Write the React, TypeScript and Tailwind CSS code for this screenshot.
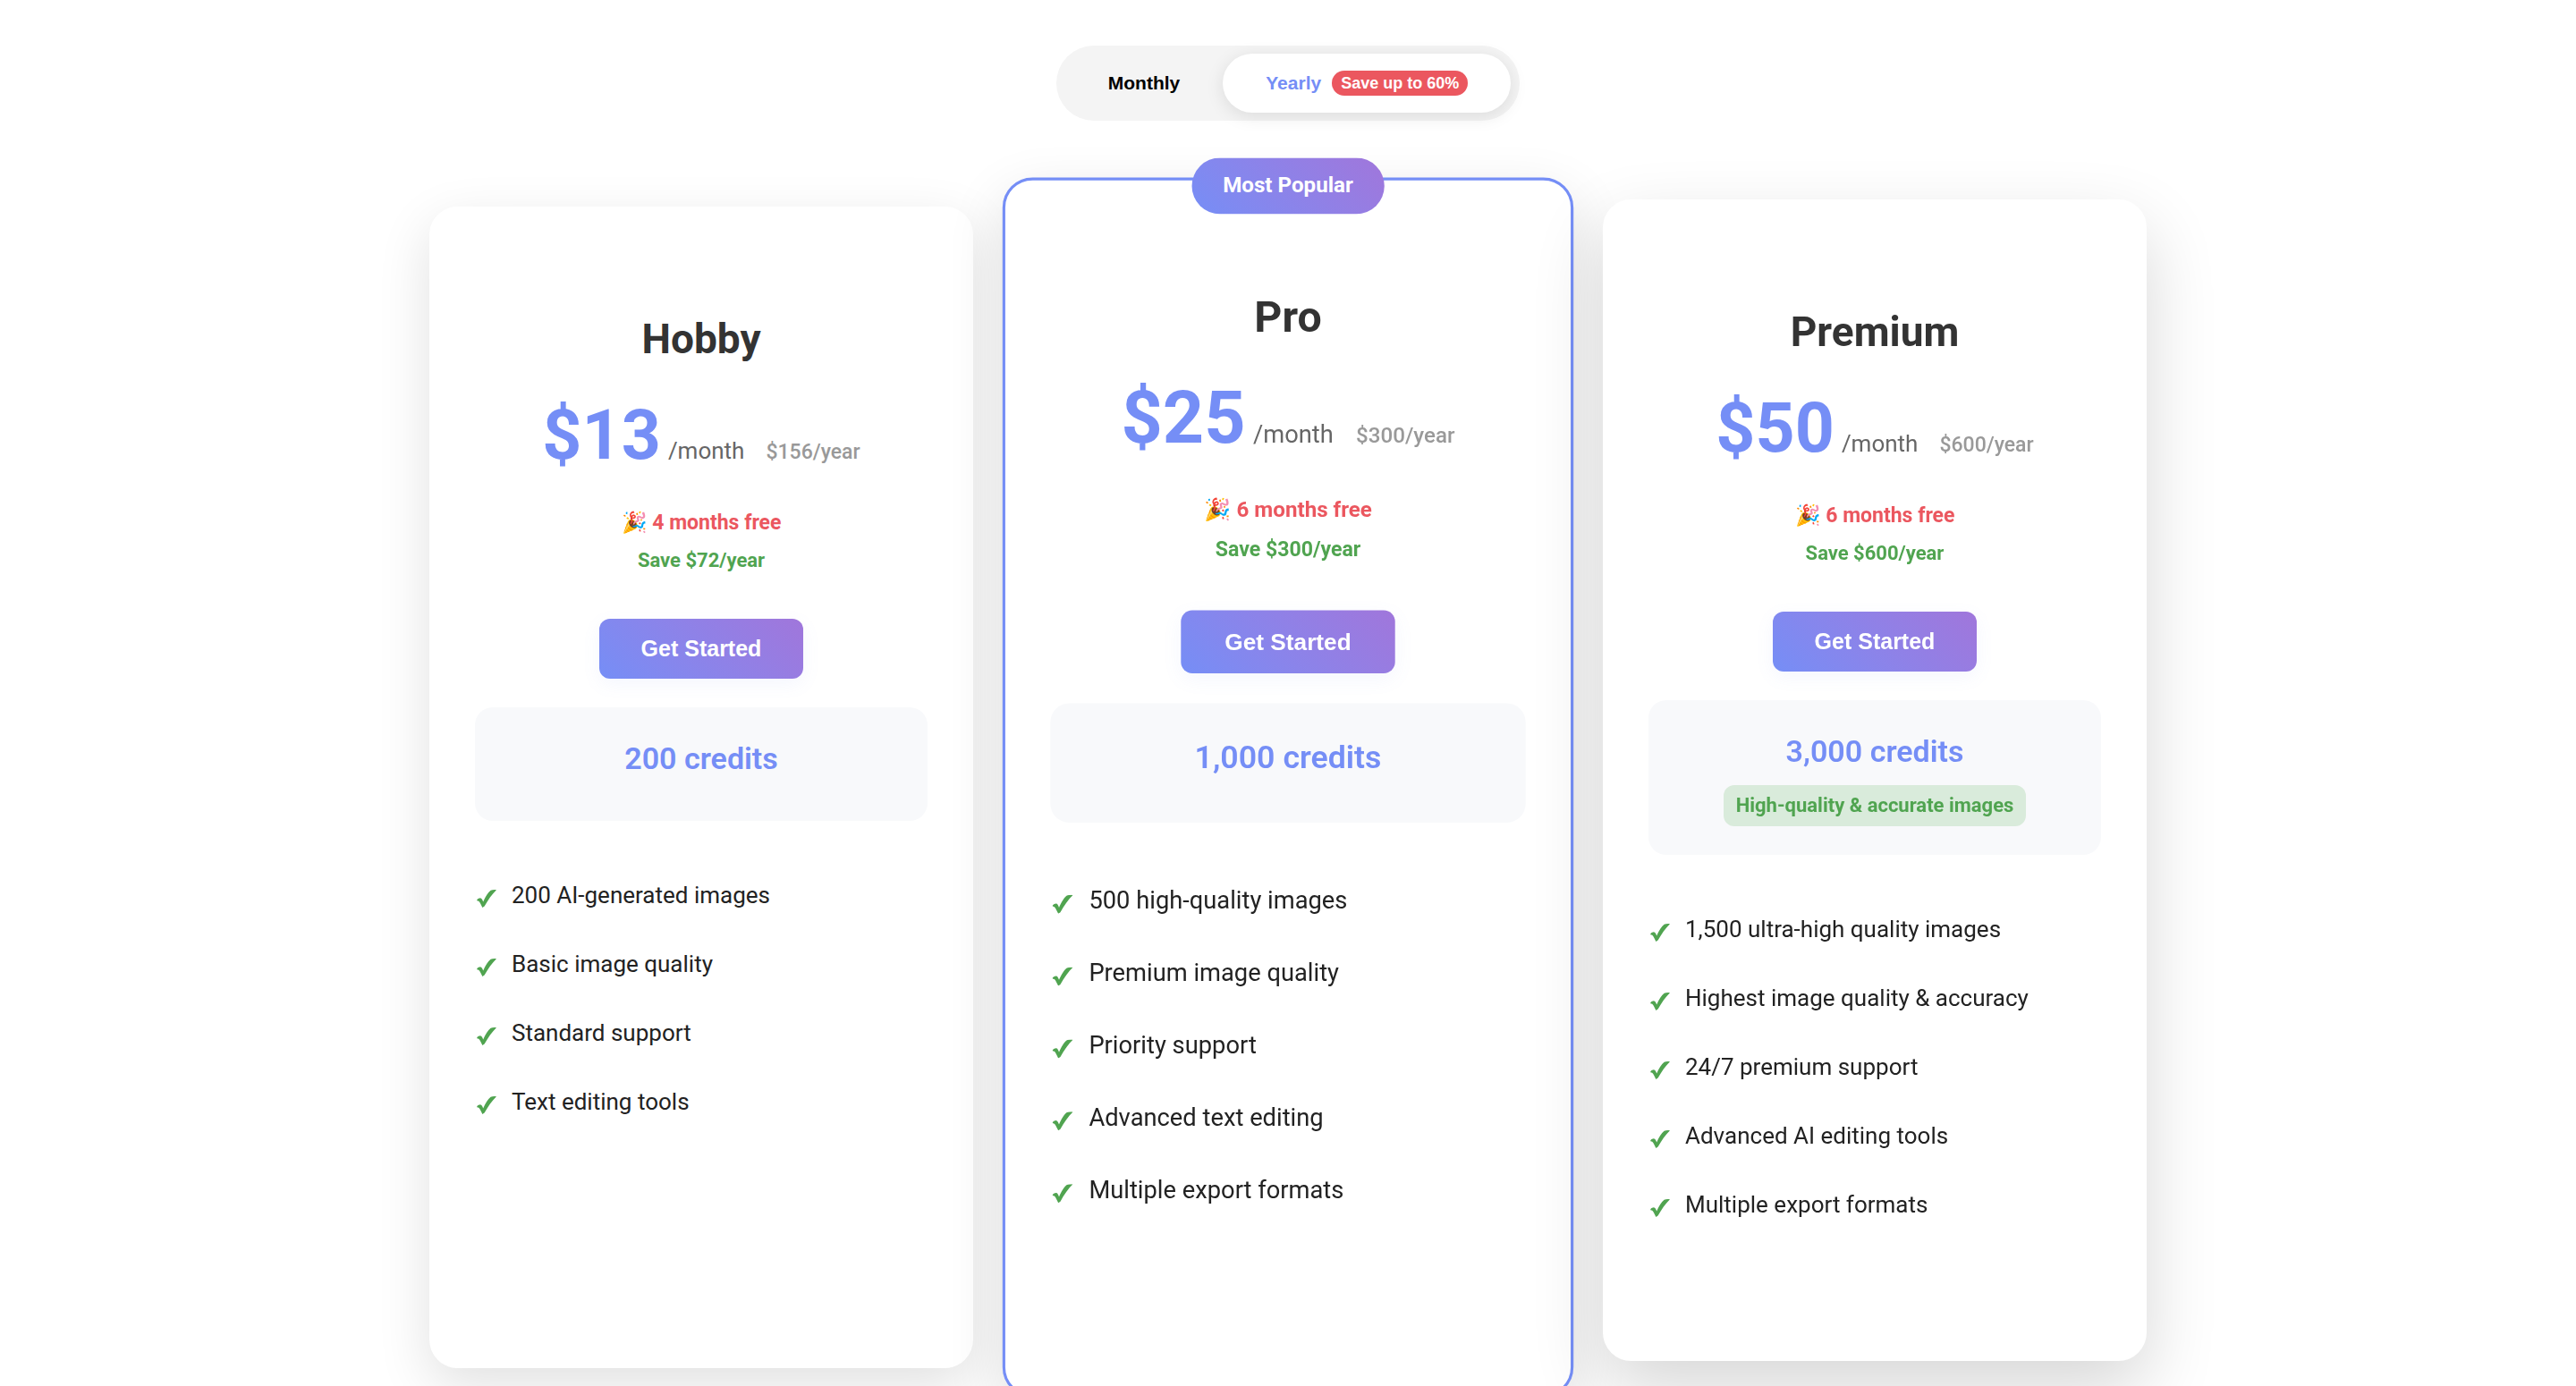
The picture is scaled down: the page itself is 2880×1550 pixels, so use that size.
import React, { useState } from 'react';
import clsx from 'clsx';

type Billing = 'monthly' | 'yearly';

interface Plan {
    name: string;
    price: string;
    yearPrice: string;
    freeMonths: string;
    saving: string;
    credits: string;
    note?: string;
    features: string[];
    popular?: boolean;
    raised?: boolean;
}

const plans: Plan[] = [
    {
        name: 'Hobby',
        price: '$13',
        yearPrice: '$156/year',
        freeMonths: '4 months free',
        saving: 'Save $72/year',
        credits: '200 credits',
        features: ['200 AI-generated images', 'Basic image quality', 'Standard support', 'Text editing tools'],
    },
    {
        name: 'Pro',
        price: '$25',
        yearPrice: '$300/year',
        freeMonths: '6 months free',
        saving: 'Save $300/year',
        credits: '1,000 credits',
        features: [
            '500 high-quality images',
            'Premium image quality',
            'Priority support',
            'Advanced text editing',
            'Multiple export formats',
        ],
        popular: true,
    },
    {
        name: 'Premium',
        price: '$50',
        yearPrice: '$600/year',
        freeMonths: '6 months free',
        saving: 'Save $600/year',
        credits: '3,000 credits',
        note: 'High-quality & accurate images',
        features: [
            '1,500 ultra-high quality images',
            'Highest image quality & accuracy',
            '24/7 premium support',
            'Advanced AI editing tools',
            'Multiple export formats',
        ],
        raised: true,
    },
];

const CheckMark = () => (
    <svg viewBox="0 0 22 20" className="mt-1.5 h-5 w-[22px] shrink-0 fill-[#50a450]" aria-hidden="true">
        <path d="M.3 11.200C1.600 10 3 9.200 4.400 9.400C5.800 9.800 6.600 11.800 7.200 13.600C9.600 8 12.400 3 15.600.8C17.400 0 19.600 0 22 .2C17 5 12.600 11.500 8.600 18.600L6.400 20C4.800 17.200 3.800 14 2.200 12.800C1.500 12.400.9 12.300.3 12.200Z" />
    </svg>
);

const BillingToggle: React.FC<{ value: Billing; onChange: (value: Billing) => void }> = ({ value, onChange }) => {
    const base = 'flex h-[66px] cursor-pointer items-center gap-3 rounded-full px-12 text-[21px] font-bold';
    const active = 'bg-white text-[#758ef6] shadow-[0_4px_20px_rgba(0,0,0,0.1)]';

    return (
        <div className="flex rounded-full bg-[#f4f4f4] px-[10px] py-[9px] font-['Liberation_Sans',Arial,sans-serif]">
            <button
                type="button"
                aria-pressed={value === 'monthly'}
                onClick={() => onChange('monthly')}
                className={clsx(base, value === 'monthly' ? active : 'text-black')}
            >
                Monthly
            </button>
            <button
                type="button"
                aria-pressed={value === 'yearly'}
                onClick={() => onChange('yearly')}
                className={clsx(base, value === 'yearly' ? active : 'text-black')}
            >
                Yearly
                <span className="rounded-full bg-[#eb575f] px-[10px] text-[18px] leading-[28px] text-white">
                    Save up to 60%
                </span>
            </button>
        </div>
    );
};

const PlanCard: React.FC<{ plan: Plan }> = ({ plan }) => (
    <article
        className={clsx(
            'relative flex min-h-[1299px] flex-col items-center rounded-[32px] border-[3px] bg-white px-12 pt-[117px] pb-12',
            plan.popular ? 'scale-105 border-[#758ef6]' : 'border-white',
            plan.raised
                ? '-translate-y-2 shadow-[0_32px_80px_rgba(0,0,0,0.16)]'
                : 'shadow-[0_20px_60px_rgba(0,0,0,0.12)]'
        )}
    >
        {plan.popular && (
            <span className="absolute -top-6 left-1/2 -translate-x-1/2 rounded-full bg-linear-45 from-[#758ef6] to-[#a076db] px-[33px] text-[23px] leading-[60px] font-bold whitespace-nowrap text-white">
                Most Popular
            </span>
        )}

        <h2 className="text-[46px] leading-[56px] font-bold text-[#333]">{plan.name}</h2>

        {/* Price */}
        <div className="mt-[35px] flex items-baseline whitespace-nowrap">
            <span className="text-[77px] leading-[90px] font-bold text-[#758ef6]">{plan.price}</span>
            <span className="ml-2 text-[26px] leading-none text-[#666]">/month</span>
            <span className="ml-6 text-[23px] leading-none font-medium text-[#999]">{plan.yearPrice}</span>
        </div>

        {/* Savings */}
        <p className="mt-9 text-[23px] leading-[34px] font-bold text-[#eb575f]">🎉 {plan.freeMonths}</p>
        <p className="mt-2 text-[22px] leading-[33px] font-bold text-[#50a450]">{plan.saving}</p>

        <button
            type="button"
            className="mt-[49px] h-[67px] cursor-pointer rounded-xl bg-linear-45 from-[#758ef6] to-[#a076db] px-[47px] font-['Liberation_Sans',Arial,sans-serif] text-[25px] font-bold text-white shadow-[0_6px_20px_rgba(117,142,246,0.08)]"
        >
            Get Started
        </button>

        {/* Credits */}
        <div className="mt-8 w-full rounded-[20px] bg-[#f8f9fb] py-8 text-center">
            <p className="mb-3 text-[34px] leading-[51px] font-semibold text-[#758ef6]">{plan.credits}</p>
            {plan.note && (
                <p className="mx-auto w-fit rounded-xl bg-[#d9ebdb] px-[14px] text-[22px] leading-[46px] font-bold text-[#50a450]">
                    {plan.note}
                </p>
            )}
        </div>

        <ul className="mt-[45px] w-full">
            {plan.features.map((feature) => (
                <li key={feature} className="flex items-center gap-[17px] py-[19px] pl-0.5 text-[26px] leading-[39px] text-[#222]">
                    <CheckMark />
                    {feature}
                </li>
            ))}
        </ul>
    </article>
);

export default function App() {
    const [billing, setBilling] = useState<Billing>('yearly');

    return (
        <main className="flex flex-col items-center overflow-hidden bg-white px-12 pt-[51px] pb-12 font-[Roboto,sans-serif]">
            <BillingToggle value={billing} onChange={setBilling} />
            <section className="mt-24 grid w-full max-w-[1920px] grid-cols-3 gap-12">
                {plans.map((plan) => (
                    <PlanCard key={plan.name} plan={plan} />
                ))}
            </section>
        </main>
    );
}
